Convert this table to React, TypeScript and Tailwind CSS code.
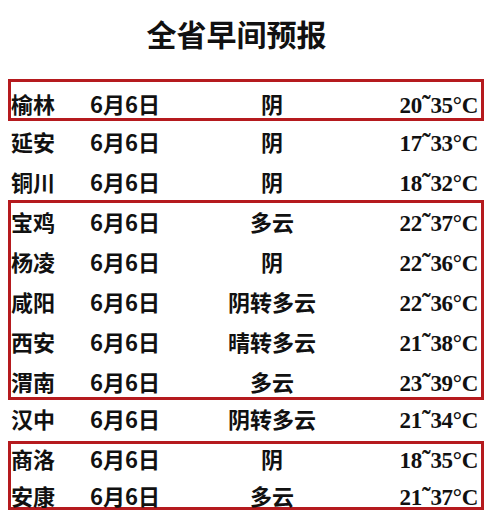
type Row = { city: string; weather: string; low: number; high: number };

const rows: Row[] = [
  { city: "榆林", weather: "阴", low: 20, high: 35 },
  { city: "延安", weather: "阴", low: 17, high: 33 },
  { city: "铜川", weather: "阴", low: 18, high: 32 },
  { city: "宝鸡", weather: "多云", low: 22, high: 37 },
  { city: "杨凌", weather: "阴", low: 22, high: 36 },
  { city: "咸阳", weather: "阴转多云", low: 22, high: 36 },
  { city: "西安", weather: "晴转多云", low: 21, high: 38 },
  { city: "渭南", weather: "多云", low: 23, high: 39 },
  { city: "汉中", weather: "阴转多云", low: 21, high: 34 },
  { city: "商洛", weather: "阴", low: 18, high: 35 },
  { city: "安康", weather: "多云", low: 21, high: 37 },
];

function ForecastRow({ row }: { row: Row }) {
  return (
    <div className="flex items-baseline h-[22px] leading-[22px] text-[22px] font-bold text-[#111]">
      <span className="w-[79px] shrink-0">{row.city}</span>
      <span className="w-[100px] shrink-0">6月6日</span>
      <span className="w-[164px] shrink-0 text-center">{row.weather}</span>
      <span className="flex-1 text-right pr-[3px] text-[23px] tracking-[-0.3px] font-['Liberation_Serif',serif]">
        {row.low}
        <span className="text-[26px]">˜</span>
        {row.high}°C
      </span>
    </div>
  );
}

export default function App() {
  const [yulin, yanan, tongchuan, baoji, yangling, xianyang, xian, weinan, hanzhong, shangluo, ankang] = rows;

  return (
    <div className="w-[492px] h-[527px] bg-white overflow-hidden font-['Noto_Sans_CJK_SC','Noto_Sans',sans-serif]">
      {/* Title */}
      <h1 className="pt-[18px] pr-[19px] h-[48px] text-center text-[30px] leading-[30px] font-bold text-[#111]">
        全省早间预报
      </h1>

      <div className="ml-[8px] w-[476px]">
        {/* 榆林 */}
        <div className="mt-[31px] border-[3px] border-[#b51a1e] pt-[10px] pb-[4px]">
          <ForecastRow row={yulin} />
        </div>

        <div className="px-[3px] pt-[9px] pb-[8px] flex flex-col gap-[18px]">
          <ForecastRow row={yanan} />
          <ForecastRow row={tongchuan} />
        </div>

        {/* 关中 */}
        <div className="border-[3px] border-[#b51a1e] pt-[7px] pb-[5px] flex flex-col gap-[18px]">
          <ForecastRow row={baoji} />
          <ForecastRow row={yangling} />
          <ForecastRow row={xianyang} />
          <ForecastRow row={xian} />
          <ForecastRow row={weinan} />
        </div>

        <div className="px-[3px] pt-[7px] pb-[12px]">
          <ForecastRow row={hanzhong} />
        </div>

        {/* 陕南 */}
        <div className="border-[3px] border-[#b51a1e] pt-[3px] pb-[1px] flex flex-col gap-[15px]">
          <ForecastRow row={shangluo} />
          <ForecastRow row={ankang} />
        </div>
      </div>
    </div>
  );
}
